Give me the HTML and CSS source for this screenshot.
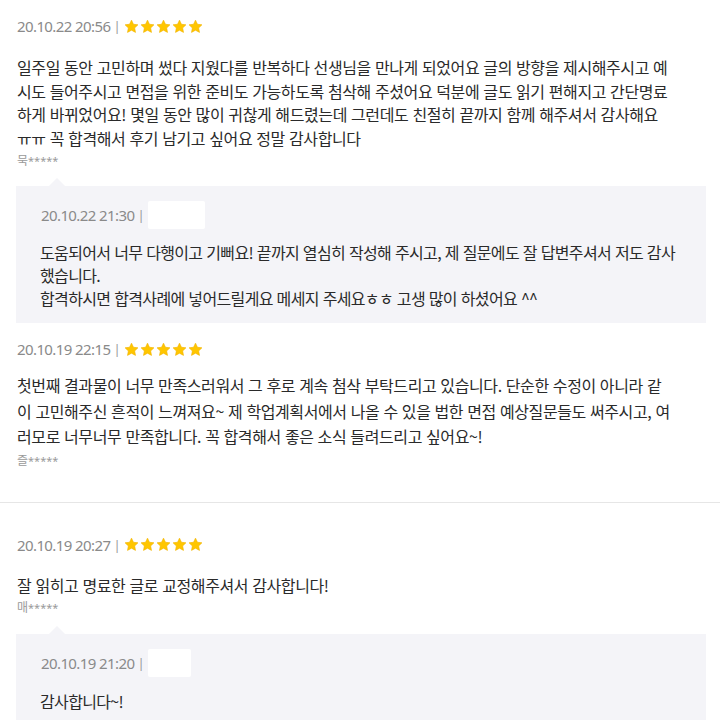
FILE: index.html
```html
<!DOCTYPE html>
<html lang="ko">
<head>
<meta charset="utf-8">
<link rel="stylesheet" href="styles.css">
</head>
<body>
<svg width="0" height="0" class="defs">
  <defs>
    <symbol id="star" viewBox="0 0 24 24">
      <path d="M12 1.8l3.1 6.6 7.2.9-5.3 5 1.4 7.1L12 17.9l-6.4 3.5 1.4-7.1-5.3-5 7.2-.9z" fill="#ffc600" stroke="#f2b300" stroke-width="1" stroke-linejoin="round"/>
    </symbol>
  </defs>
</svg>

<div class="review r1">
  <div class="head"><span class="date">20.10.22 20:56</span><span class="bar">|</span><span class="stars"><svg><use href="#star"/></svg><svg><use href="#star"/></svg><svg><use href="#star"/></svg><svg><use href="#star"/></svg><svg><use href="#star"/></svg></span></div>
  <p class="body">일주일 동안 고민하며 썼다 지웠다를 반복하다 선생님을 만나게 되었어요 글의 방향을 제시해주시고 예시도 들어주시고 면접을 위한 준비도 가능하도록 첨삭해 주셨어요 덕분에 글도 읽기 편해지고 간단명료하게 바뀌었어요! 몇일 동안 많이 귀찮게 해드렸는데 그런데도 친절히 끝까지 함께 해주셔서 감사해요 ㅠㅠ 꼭 합격해서 후기 남기고 싶어요 정말 감사합니다</p>
  <div class="user">묵<span class="ast">*****</span></div>
  <div class="reply">
    <div class="head rhead"><span class="date">20.10.22 21:30</span><span class="bar">|</span><span class="mask m1"></span></div>
    <p class="rbody">도움되어서 너무 다행이고 기뻐요! 끝까지 열심히 작성해 주시고, 제 질문에도 잘 답변주셔서 저도 감사했습니다.<br>합격하시면 합격사례에 넣어드릴게요 메세지 주세요ㅎㅎ 고생 많이 하셨어요 ^^</p>
  </div>
</div>

<div class="review r2">
  <div class="head"><span class="date">20.10.19 22:15</span><span class="bar">|</span><span class="stars"><svg><use href="#star"/></svg><svg><use href="#star"/></svg><svg><use href="#star"/></svg><svg><use href="#star"/></svg><svg><use href="#star"/></svg></span></div>
  <p class="body">첫번째 결과물이 너무 만족스러워서 그 후로 계속 첨삭 부탁드리고 있습니다. 단순한 수정이 아니라 같이 고민해주신 흔적이 느껴져요~ 제 학업계획서에서 나올 수 있을 법한 면접 예상질문들도 써주시고, 여러모로 너무너무 만족합니다. 꼭 합격해서 좋은 소식 들려드리고 싶어요~!</p>
  <div class="user">즐<span class="ast">*****</span></div>
</div>

<div class="review r3">
  <div class="head"><span class="date">20.10.19 20:27</span><span class="bar">|</span><span class="stars"><svg><use href="#star"/></svg><svg><use href="#star"/></svg><svg><use href="#star"/></svg><svg><use href="#star"/></svg><svg><use href="#star"/></svg></span></div>
  <p class="body">잘 읽히고 명료한 글로 교정해주셔서 감사합니다!</p>
  <div class="user">매<span class="ast">*****</span></div>
  <div class="reply">
    <div class="head rhead"><span class="date">20.10.19 21:20</span><span class="bar">|</span><span class="mask m2"></span></div>
    <p class="rbody">감사합니다~!</p>
  </div>
</div>
</body>
</html>
```

FILE: styles.css
```css
html, body {
  margin: 0;
  padding: 0;
  background: #ffffff;
}
body {
  font-family: "Noto Sans CJK KR", "Noto Sans", sans-serif;
  color: #2a2a2a;
  width: 720px;
  height: 720px;
  overflow: hidden;
}
.defs {
  position: absolute;
}
.review {
  padding: 0 14px 0 16px;
}
.head {
  display: flex;
  align-items: center;
  height: 18px;
  padding-left: 1px;
}
.date {
  font-family: "Noto Sans", sans-serif;
  font-size: 15px;
  letter-spacing: -0.6px;
  color: #8a8a8a;
  line-height: 18px;
}
.bar {
  font-family: "Noto Sans", sans-serif;
  font-size: 13px;
  color: #9a9a9a;
  margin: 0 3px 0 3px;
  line-height: 18px;
}
.stars {
  display: flex;
  gap: 1px;
}
.stars svg {
  width: 15px;
  height: 15px;
}
.body {
  margin: 0;
  font-size: 16px;
  line-height: 23.5px;
  letter-spacing: -0.4px;
  word-break: break-all;
  padding-left: 1px;
  width: 656px;
  color: #2a2a2a;
}
.user {
  font-size: 12px;
  line-height: 16px;
  color: #9a9a9a;
  padding-left: 1px;
}
.ast {
  font-family: "Noto Sans", sans-serif;
  font-size: 11px;
  letter-spacing: 0;
}
.reply {
  position: relative;
  background: #f4f4f8;
  padding: 0 24px 0 24px;
}
.reply::before {
  content: "";
  position: absolute;
  left: 33px;
  top: -8px;
  border-left: 8px solid transparent;
  border-right: 8px solid transparent;
  border-bottom: 8px solid #f4f4f8;
}
.rhead {
  height: 28px;
}
.mask {
  display: block;
  height: 28px;
  background: #ffffff;
  border-radius: 2px;
}
.m1 {
  width: 57px;
}
.m2 {
  width: 43px;
}
.rbody {
  margin: 0;
  font-size: 16px;
  line-height: 23px;
  letter-spacing: -0.65px;
  word-break: break-all;
  color: #2a2a2a;
}

/* vertical rhythm */
.r1 > .head { padding-top: 17px; }
.r1 > .body { margin-top: 21px; }
.r1 > .user { margin-top: 2px; }
.r1 .reply { margin-top: 17px; padding-top: 15px; padding-bottom: 13px; }
.r1 .rbody { margin-top: 12px; }

.r2 { padding-top: 17px; padding-bottom: 33px; border-bottom: 1px solid #e6e6e6; }
.r2 > .body { margin-top: 15px; line-height: 25.5px; }
.r2 > .user { margin-top: 2px; }

.r3 { padding-top: 33px; }
.r3 > .body { margin-top: 20px; }
.r3 > .user { margin-top: 2px; }
.r3 .reply { margin-top: 18px; padding-top: 15px; padding-bottom: 20px; }
.r3 .rbody { margin-top: 13px; }
```
